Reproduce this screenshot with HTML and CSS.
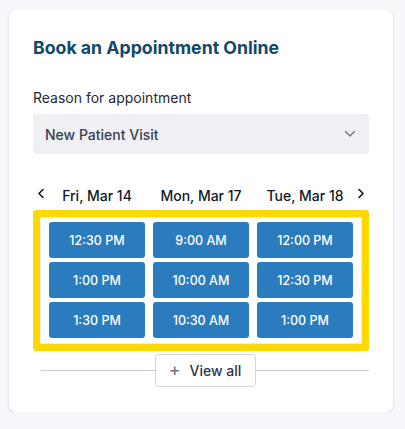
FILE: index.html
```html
<!DOCTYPE html>
<html lang="en">
<head>
<meta charset="utf-8">
<title>Book an Appointment Online</title>
<link rel="stylesheet" href="styles.css">
</head>
<body>
<div class="card">
  <h2 class="title">Book an Appointment Online</h2>
  <label class="label">Reason for appointment</label>
  <div class="select">
    <span>New Patient Visit</span>
    <svg class="caret" width="12" height="8" viewBox="0 0 12 8"><path d="M1.5 1.5 L6 6 L10.5 1.5" fill="none" stroke="#6b7280" stroke-width="1.4" stroke-linecap="round" stroke-linejoin="round"/></svg>
  </div>
  <div class="days">
    <svg class="nav prev" width="8" height="12" viewBox="0 0 8 12"><path d="M6 1.5 L2 5.5 L6 9.5" fill="none" stroke="#111827" stroke-width="1.6" stroke-linecap="round" stroke-linejoin="round"/></svg>
    <div class="day-grid">
      <span>Fri, Mar 14</span>
      <span>Mon, Mar 17</span>
      <span>Tue, Mar 18</span>
    </div>
    <svg class="nav next" width="8" height="12" viewBox="0 0 8 12"><path d="M2 1.5 L6 5.5 L2 9.5" fill="none" stroke="#111827" stroke-width="1.6" stroke-linecap="round" stroke-linejoin="round"/></svg>
  </div>
  <div class="slots">
    <div class="slot-grid">
      <button class="slot">12:30 PM</button>
      <button class="slot">9:00 AM</button>
      <button class="slot">12:00 PM</button>
      <button class="slot">1:00 PM</button>
      <button class="slot">10:00 AM</button>
      <button class="slot">12:30 PM</button>
      <button class="slot">1:30 PM</button>
      <button class="slot">10:30 AM</button>
      <button class="slot">1:00 PM</button>
    </div>
  </div>
  <div class="more">
    <button class="view-all"><span class="plus">+</span>View all</button>
  </div>
</div>
</body>
</html>
```
FILE: styles.css
```css
html, body {
  margin: 0;
  padding: 0;
}
body {
  background: #f6f7fb;
  font-family: Inter, "Noto Sans", sans-serif;
  padding: 10px 12px 0 9px;
}
.card {
  width: 384px;
  height: 402px;
  box-sizing: border-box;
  background: #ffffff;
  border-radius: 7px;
  box-shadow: 0 1px 3px rgba(15, 23, 42, 0.10), 0 1px 2px rgba(15, 23, 42, 0.06);
  padding: 26px 24px 0 24px;
}
.title {
  margin: 0;
  font-size: 17.7px;
  line-height: 24px;
  font-weight: 700;
  color: #11486b;
}
.label {
  display: block;
  margin-top: 28px;
  font-size: 14px;
  line-height: 20px;
  color: #1f2937;
}
.select {
  margin-top: 6px;
  height: 40px;
  background: #eff0f4;
  border-radius: 4px;
  display: flex;
  align-items: center;
  justify-content: space-between;
  padding: 0 12px;
  font-size: 14px;
  font-weight: 500;
  color: #374151;
}
.caret {
  margin-right: 1px;
}
.days {
  margin-top: 32px;
  height: 20px;
  display: flex;
  align-items: center;
}
.day-grid {
  flex: 1;
  display: grid;
  grid-template-columns: repeat(3, 96px);
  column-gap: 8px;
  justify-content: center;
  font-size: 14px;
  font-weight: 500;
  line-height: 20px;
  color: #111827;
  white-space: nowrap;
}
.day-grid span {
  display: flex;
  justify-content: center;
}
.nav {
  flex: none;
  margin-top: -4px;
}
.prev { margin-left: 4px; }
.next { margin-right: 4px; }
.slots {
  margin-top: 4px;
  border: 7px solid #ffd800;
  border-radius: 3px;
  padding: 5px 0 6px;
  box-shadow: inset 0 0 0 1px #eceef2;
}
.slot-grid {
  display: grid;
  grid-template-columns: repeat(3, 96px);
  gap: 4px 8px;
  justify-content: center;
}
.slot {
  height: 36px;
  border: none;
  border-radius: 3px;
  background: #2b7bbf;
  color: #ffffff;
  font-family: Inter, "Noto Sans", sans-serif;
  font-size: 12.5px;
  font-weight: 500;
  padding: 0;
}
.more {
  margin: 3px 0 0 8px;
  display: flex;
  align-items: center;
  justify-content: center;
}
.more::before,
.more::after {
  content: "";
  flex: 1;
  height: 1px;
  background: #c9ccd3;
}
.view-all {
  width: 101px;
  height: 33px;
  background: #ffffff;
  border: 1px solid #d1d5db;
  border-radius: 4px;
  font-family: Inter, "Noto Sans", sans-serif;
  font-size: 14px;
  font-weight: 500;
  color: #2d3748;
  display: flex;
  align-items: center;
  justify-content: center;
  padding: 0;
}
.plus {
  font-size: 18px;
  font-weight: 400;
  color: #6b7280;
  margin-right: 9px;
  line-height: 1;
  margin-top: -2px;
}
```
